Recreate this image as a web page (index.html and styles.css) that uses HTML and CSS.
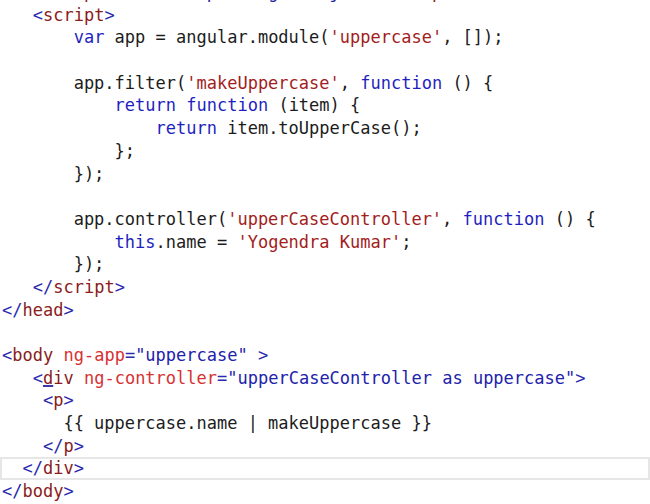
FILE: index.html
```html
<!DOCTYPE html>
<html>
<head>
<meta charset="utf-8">
<link rel="stylesheet" href="styles.css">
</head>
<body>
<div class="editor">
<div class="line">   <span class="d">&lt;</span><span class="t">script</span> <span class="a">src</span><span class="d">=</span><span class="v">"Scripts/angular.js"</span><span class="d">&gt;&lt;/</span><span class="t">script</span><span class="d">&gt;</span></div>
<div class="line">   <span class="d">&lt;</span><span class="t">script</span><span class="d">&gt;</span></div>
<div class="line">       <span class="k">var</span> app = angular.module(<span class="s">'uppercase'</span>, []);</div>
<div class="line"> </div>
<div class="line">       app.filter(<span class="s">'makeUppercase'</span>, <span class="k">function</span> () {</div>
<div class="line">           <span class="k">return</span> <span class="k">function</span> (item) {</div>
<div class="line">               <span class="k">return</span> item.toUpperCase();</div>
<div class="line">           };</div>
<div class="line">       });</div>
<div class="line"> </div>
<div class="line">       app.controller(<span class="s">'upperCaseController'</span>, <span class="k">function</span> () {</div>
<div class="line">           <span class="k">this</span>.name = <span class="s">'Yogendra Kumar'</span>;</div>
<div class="line">       });</div>
<div class="line">   <span class="d">&lt;/</span><span class="t">script</span><span class="d">&gt;</span></div>
<div class="line"><span class="d">&lt;/</span><span class="t">head</span><span class="d">&gt;</span></div>
<div class="line"> </div>
<div class="line"><span class="d">&lt;</span><span class="t">body</span> <span class="a">ng-app</span><span class="d">=</span><span class="v">"uppercase"</span> <span class="d">&gt;</span></div>
<div class="line">   <span class="d">&lt;</span><span class="t"><span class="mark">d</span>iv</span> <span class="a">ng-controller</span><span class="d">=</span><span class="v">"upperCaseController as uppercase"</span><span class="d">&gt;</span></div>
<div class="line">    <span class="d">&lt;</span><span class="t">p</span><span class="d">&gt;</span></div>
<div class="line">      {{ uppercase.name | makeUppercase }}</div>
<div class="line">    <span class="d">&lt;/</span><span class="t">p</span><span class="d">&gt;</span></div>
<div class="line current">  <span class="d">&lt;/</span><span class="t">div</span><span class="d">&gt;</span></div>
<div class="line"><span class="d">&lt;/</span><span class="t">body</span><span class="d">&gt;</span></div>
</div>
</body>
</html>
```
FILE: styles.css
```css
html, body {
  margin: 0;
  padding: 0;
  background: #ffffff;
  overflow: hidden;
}
.editor {
  margin-top: -19px;
  font-family: "DejaVu Sans Mono", "Liberation Mono", monospace;
  font-size: 17px;
  color: #1c1c1c;
}
.line {
  white-space: pre;
  height: 22.7px;
  line-height: 22.7px;
  padding-left: 2px;
  box-sizing: border-box;
}
.current {
  box-shadow: inset 0 0 0 2px #e6e6e6;
}
.d { color: #2a2ab0; }
.t { color: #8a1c1c; }
.a { color: #d63232; }
.v { color: #2222aa; }
.k { color: #1f1fc0; }
.s { color: #a31d1d; }
.mark {
  text-decoration: underline;
  text-decoration-color: #3a3aa8;
  text-decoration-thickness: 2px;
  text-underline-offset: 1px;
}
```
